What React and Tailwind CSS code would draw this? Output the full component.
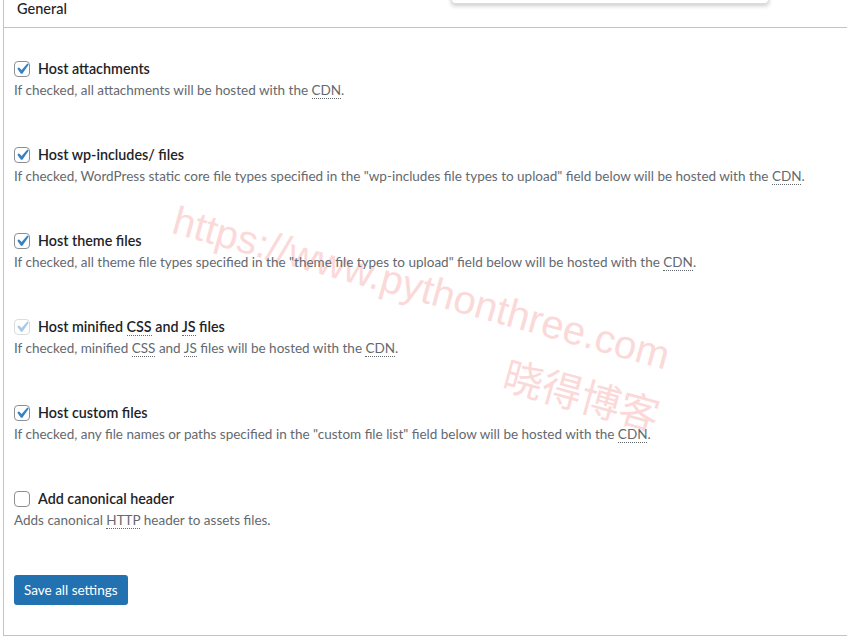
import React from "react";

const Abbr = ({ children }) => (
  <abbr className="border-b border-dotted border-[#646970] [text-decoration:none]">{children}</abbr>
);

const Check = ({ checked, disabled }) => (
  <span
    className={
      "flex h-4 w-4 shrink-0 items-center justify-center rounded-[4px] border bg-white " +
      (disabled ? "border-[#dcdcde]" : "border-[#8c8f94]")
    }
  >
    {checked && (
      <svg viewBox="0 0 20 20" className="-m-[4px] h-[22px] w-[22px] shrink-0">
        <path
          d="M14.83 4.89l1.34.94-5.81 8.38H9.02L5.78 9.67l1.34-1.25 2.57 2.4z"
          fill={disabled ? "#a7c8e6" : "#3582c4"}
        />
      </svg>
    )}
  </span>
);

const items = [
  {
    label: "Host attachments",
    checked: true,
    desc: <>If checked, all attachments will be hosted with the <Abbr>CDN</Abbr>.</>,
  },
  {
    label: "Host wp-includes/ files",
    checked: true,
    desc: (
      <>
        If checked, WordPress static core file types specified in the "wp-includes file types to upload" field below will be hosted with the <Abbr>CDN</Abbr>.
      </>
    ),
  },
  {
    label: "Host theme files",
    checked: true,
    desc: (
      <>
        If checked, all theme file types specified in the "theme file types to upload" field below will be hosted with the <Abbr>CDN</Abbr>.
      </>
    ),
  },
  {
    label: (
      <>
        Host minified <Abbr>CSS</Abbr> and <Abbr>JS</Abbr> files
      </>
    ),
    checked: true,
    disabled: true,
    desc: (
      <>
        If checked, minified <Abbr>CSS</Abbr> and <Abbr>JS</Abbr> files will be hosted with the <Abbr>CDN</Abbr>.
      </>
    ),
  },
  {
    label: "Host custom files",
    checked: true,
    desc: (
      <>
        If checked, any file names or paths specified in the "custom file list" field below will be hosted with the <Abbr>CDN</Abbr>.
      </>
    ),
  },
  {
    label: "Add canonical header",
    checked: false,
    desc: (
      <>
        Adds canonical <Abbr>HTTP</Abbr> header to assets files.
      </>
    ),
  },
];

export default function App() {
  return (
    <div
      className="relative h-[637px] w-[847px] overflow-hidden bg-white"
      style={{ fontFamily: '"Segoe UI", Lato, "Noto Sans", sans-serif' }}
    >
      <div
        className="pointer-events-none absolute left-[174px] top-[199px] origin-left rotate-[15.5deg] whitespace-nowrap text-[40px] leading-none text-[#fbd9d9]"
        style={{ fontFamily: '"Liberation Sans", Arial, sans-serif' }}
      >
        https://www.pythonthree.com
      </div>
      <div
        className="pointer-events-none absolute left-[505px] top-[352px] origin-left rotate-[15.5deg] whitespace-nowrap text-[40px] leading-none text-[#fbd9d9]"
        style={{ fontFamily: '"Noto Sans CJK SC", sans-serif' }}
      >
        晓得博客
      </div>

      <div className="relative ml-[3px] flex h-[636px] flex-col border-b border-l border-[#c3c4c7]">
        <div className="h-[28px] border-b border-[#c3c4c7] pl-[13px] text-[14.5px] font-medium leading-[18px] text-[#1d2327]">
          General
        </div>
        <div className="flex flex-col gap-[48px] pl-[10px] pt-[33px]">
          {items.map((it, i) => (
            <div key={i} className="flex flex-col">
              <div className="flex h-4 items-center gap-2">
                <Check checked={it.checked} disabled={it.disabled} />
                <span className="text-[14.3px] font-semibold leading-4 text-[#1d2327]">{it.label}</span>
              </div>
              <p className="mt-1 text-[13.5px] leading-[18px] text-[#646970]">{it.desc}</p>
            </div>
          ))}
        </div>
        <div className="pl-[10px] pt-[46px]">
          <button className="h-[30px] rounded-[3px] bg-[#2271b1] px-[10px] text-[13.5px] leading-[28px] text-white">
            Save all settings
          </button>
        </div>
      </div>

      <div className="absolute left-[451px] top-[-20px] h-[24px] w-[318px] rounded-b-[4px] border border-[#dcdcde] bg-white shadow-[0_2px_4px_rgba(0,0,0,0.2)]" />
    </div>
  );
}
